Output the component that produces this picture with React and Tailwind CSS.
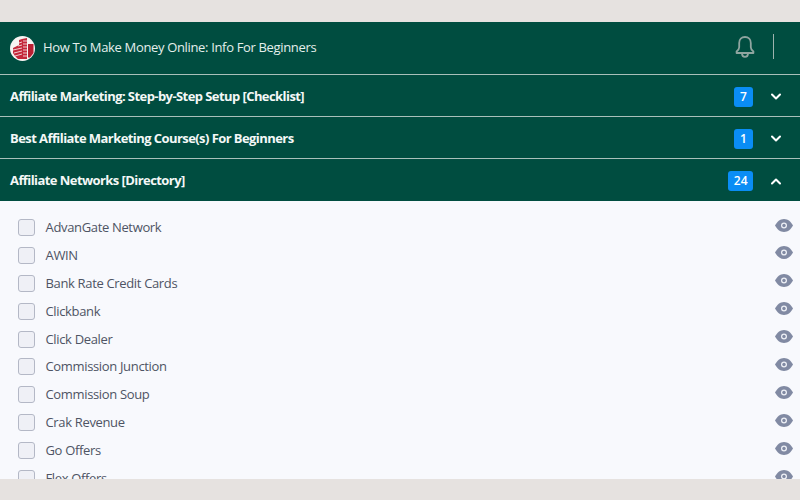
const networks = [
  "AdvanGate Network",
  "AWIN",
  "Bank Rate Credit Cards",
  "Clickbank",
  "Click Dealer",
  "Commission Junction",
  "Commission Soup",
  "Crak Revenue",
  "Go Offers",
  "Flex Offers",
];

const sections = [
  { title: "Affiliate Marketing: Step-by-Step Setup [Checklist]", count: 7 },
  { title: "Best Affiliate Marketing Course(s) For Beginners", count: 1 },
  { title: "Affiliate Networks [Directory]", count: 24, open: true },
];

function Logo() {
  return (
    <svg width="25" height="25" viewBox="0 0 25 25">
      <circle cx="12.5" cy="12.5" r="12.500" fill="#f7f3f2" />
      <path d="M3 12l6-3V4l3-1 5-1v21H8l-3-3-2-3z" fill="#c4273a" />
      <path d="M18 8h5.500v9L20 21.500h-2z" fill="#b91f32" />
      <path d="M3 14l9-2M4 17l8-2M5 20l7-2M8 10l4-1M9 7l3-1M13 5h4M13 8h4M13 11h4M13 14h4M13 17h4M13 20h4" stroke="#f6dfe0" strokeWidth="0.9" />
    </svg>
  );
}

function Bell() {
  return (
    <svg width="20" height="24" viewBox="0 0 20 24" fill="none" stroke="#8fa5a0" strokeWidth="1.800" strokeLinejoin="round">
      <path d="M10 2c-3.500 0-5.800 2.600-5.800 6v4.200c0 1.600-1 3-2.600 4.300v1.500h16.800v-1.500c-1.600-1.300-2.600-2.700-2.600-4.300V8c0-3.400-2.300-6-5.800-6z" />
      <path d="M7 18.500c0 2 1.300 3.300 3 3.300s3-1.300 3-3.300" />
    </svg>
  );
}

function Chevron({ up }) {
  return (
    <svg width="10" height="7" viewBox="0 0 10 7" fill="none" stroke="#ffffff" strokeWidth="2" strokeLinecap="round" strokeLinejoin="round">
      <path d={up ? "M1 5.500l4-4 4 4" : "M1 1.500l4 4 4-4"} />
    </svg>
  );
}

function Eye() {
  return (
    <svg width="18" height="13" viewBox="0 0 18 13">
      <path d="M9 0C5 0 2 2.800 0 6.500c2 3.700 5 6.500 9 6.500s7-2.800 9-6.500C16 2.800 13 0 9 0z" fill="#818aa3" />
      <circle cx="9" cy="6.500" r="3" fill="#eef0f6" />
      <circle cx="9" cy="6.500" r="1.700" fill="#818aa3" />
    </svg>
  );
}

export default function App() {
  return (
    <div className="h-[500px] flex flex-col overflow-hidden bg-[#e6e2e0] font-['Open_Sans',sans-serif]">
      <div className="h-[22px] shrink-0" />
      <div className="flex-1 min-h-0 overflow-hidden bg-[#f8f9fd]">
        {/* header */}
        <div className="h-[53px] bg-[#004d40] border-b border-[#a9c0ba] flex items-center pl-[10px] pr-[26px]">
          <Logo />
          <span className="ml-[8px] -mt-[1px] text-[13px] tracking-[-0.34px] text-[#e4efec] flex-1">
            How To Make Money Online: Info For Beginners
          </span>
          <span className="-mt-[3px] flex">
            <Bell />
          </span>
          <div className="ml-[18px] -mt-[3px] w-px h-[25px] bg-[#9db3ae]" />
        </div>

        {/* sections */}
        {sections.map((s, i) => (
          <div
            key={s.title}
            className={
              i < 2
                ? "h-[42px] pt-[2px] bg-[#004d40] border-b border-[#a9c0ba] flex items-center pl-[10px] pr-[19px]"
                : "h-[42px] pt-[2px] bg-[#004d40] flex items-center pl-[10px] pr-[19px]"
            }
          >
            <span className="flex-1 text-[13px] font-bold tracking-[-0.57px] text-[#f4f8f7]">{s.title}</span>
            <span className="min-w-[19px] h-[20px] px-[5.500px] rounded-[3px] bg-[#0a8df5] text-white text-[12px] font-semibold flex items-center justify-center">
              {s.count}
            </span>
            <span className="ml-[18px] flex w-[10px] justify-center">
              <Chevron up={s.open} />
            </span>
          </div>
        ))}

        {/* list */}
        <div className="pt-[18px] pl-[18px] pr-[7px] flex flex-col gap-[10.9px]">
          {networks.map((name) => (
            <div key={name} className="h-[17px] flex items-center">
              <span className="w-[17px] h-[17px] rounded-[3px] border border-[#b4b8c6] bg-[#eff0f6] shrink-0" />
              <span className="ml-[10.500px] flex-1 text-[13px] tracking-[-0.34px] leading-[17px] text-[#4e5464]">{name}</span>
              <span className="-mt-[5px] flex">
                <Eye />
              </span>
            </div>
          ))}
        </div>
      </div>
      <div className="h-[21px] shrink-0" />
    </div>
  );
}
